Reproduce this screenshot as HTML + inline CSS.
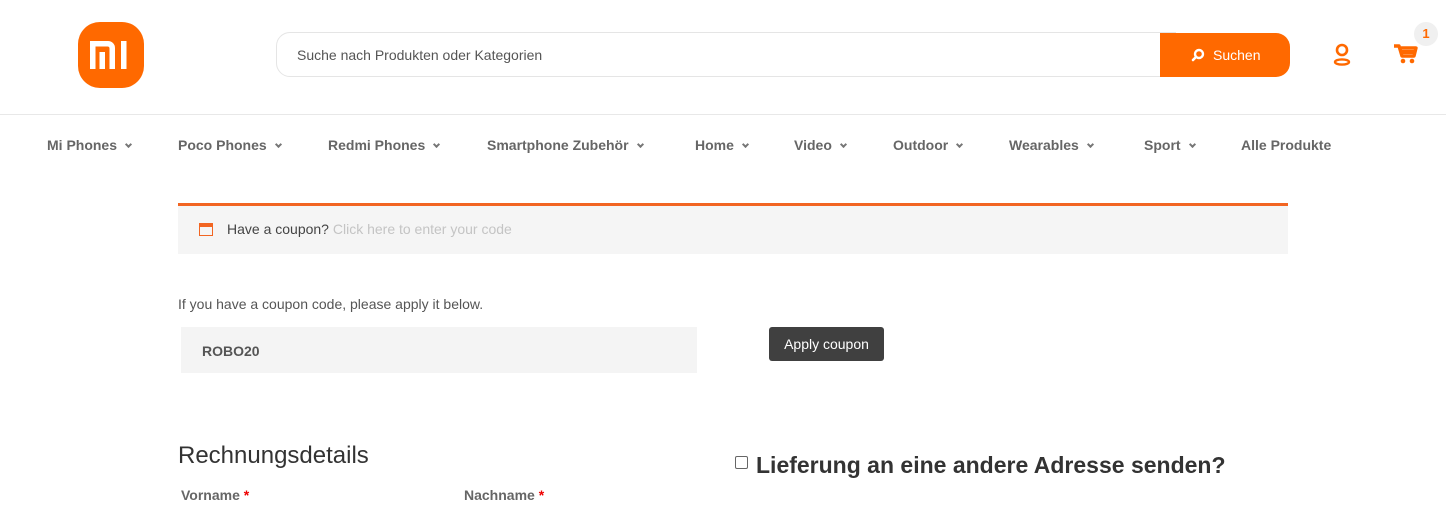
<!DOCTYPE html>
<html><head><meta charset="utf-8"><style>
*{margin:0;padding:0;box-sizing:border-box}
body{width:1446px;height:508px;overflow:hidden;background:#fff;font-family:"Liberation Sans",sans-serif;position:relative;color:#555}
.a{position:absolute;white-space:nowrap}
.nav{font-size:14px;font-weight:bold;color:#666;top:137px}
.nav .c{display:inline-block;width:5px;height:5px;border-right:2px solid #777;border-bottom:2px solid #777;transform:rotate(45deg);margin-left:9px;position:relative;top:-3px}
</style></head><body>
<div class="a" style="left:78px;top:22px;width:66px;height:66px;border-radius:22px;background:#ff6900"></div>
<svg class="a" style="left:90px;top:41px" width="44" height="28" viewBox="0 0 44 28"><path d="M0 0h18a7 7 0 0 1 7 7v21h-5.5V7.5a2 2 0 0 0-2-2H5.5V28H0z M9.5 11h5.5v17H9.5z" fill="#fff"/><rect x="31" y="0" width="5.5" height="28" fill="#fff"/></svg>
<div class="a" style="left:276px;top:32px;width:900px;height:45px;border:1px solid #e5e5e5;border-radius:14px 0 0 14px"></div>
<div class="a" style="left:297px;top:47px;font-size:14px;color:#555">Suche nach Produkten oder Kategorien</div>
<div class="a" style="left:1160px;top:33px;width:130px;height:44px;background:#ff6900;border-radius:0 14px 14px 0;color:#fff;font-size:14px;line-height:44px;padding-left:53px">Suchen</div>
<svg class="a" style="left:1191px;top:48px" width="14" height="14" viewBox="0 0 14 14"><circle cx="8" cy="6" r="4" stroke="#fff" stroke-width="2.4" fill="none"/><path d="M5 9L2 12" stroke="#fff" stroke-width="2.6" stroke-linecap="round"/></svg>
<svg class="a" style="left:1330px;top:42px" width="24" height="24" viewBox="0 0 24 24"><circle cx="12" cy="8" r="5" stroke="#ff6900" stroke-width="2.6" fill="none"/><ellipse cx="12" cy="20" rx="7" ry="2.6" stroke="#ff6900" stroke-width="2.4" fill="none"/></svg>
<svg class="a" style="left:1393px;top:43px" width="26" height="22" viewBox="0 0 26 22"><path d="M1 3h5l3 10h12l2-8H8" stroke="#ff6900" stroke-width="3.4" fill="none" stroke-linejoin="round"/><path d="M9 9h13" stroke="#ff6900" stroke-width="4"/><circle cx="10" cy="18" r="2.3" fill="#ff6900"/><circle cx="19" cy="18" r="2.3" fill="#ff6900"/></svg>
<div class="a" style="left:1414px;top:22px;width:24px;height:24px;border-radius:50%;background:#f0f0f0;color:#ff6900;font-size:13px;font-weight:bold;text-align:center;line-height:24px">1</div>
<div class="a" style="left:0;top:114px;width:1446px;height:1px;background:#e8e8e8"></div>
<div class="a nav" style="left:47px">Mi Phones<span class="c"></span></div>
<div class="a nav" style="left:178px">Poco Phones<span class="c"></span></div>
<div class="a nav" style="left:328px">Redmi Phones<span class="c"></span></div>
<div class="a nav" style="left:487px">Smartphone Zubehör<span class="c"></span></div>
<div class="a nav" style="left:695px">Home<span class="c"></span></div>
<div class="a nav" style="left:794px">Video<span class="c"></span></div>
<div class="a nav" style="left:893px">Outdoor<span class="c"></span></div>
<div class="a nav" style="left:1009px">Wearables<span class="c"></span></div>
<div class="a nav" style="left:1144px">Sport<span class="c"></span></div>
<div class="a nav" style="left:1241px">Alle Produkte</div>
<div class="a" style="left:178px;top:203px;width:1110px;height:51px;background:#f5f5f5;border-top:3px solid #f26522"></div>
<div class="a" style="left:199px;top:223px;width:14px;height:13px;border:1.5px solid #f26522;border-top-width:4px"></div>
<div class="a" style="left:227px;top:221px;font-size:14px;color:#444">Have a coupon? <span style="color:#c4c4c4">Click here to enter your code</span></div>
<div class="a" style="left:178px;top:296px;font-size:14px;color:#555">If you have a coupon code, please apply it below.</div>
<div class="a" style="left:181px;top:327px;width:516px;height:46px;background:#f4f4f4;font-size:14px;font-weight:bold;color:#555;padding:16px 0 0 21px">ROBO20</div>
<div class="a" style="left:769px;top:327px;width:115px;height:34px;background:#404040;border-radius:3px;color:#fff;font-size:14px;text-align:center;line-height:34px">Apply coupon</div>
<div class="a" style="left:178px;top:442px;font-size:24px;color:#333">Rechnungsdetails</div>
<div class="a" style="left:181px;top:487px;font-size:14px;font-weight:bold;color:#666">Vorname <span style="color:#e00">*</span></div>
<div class="a" style="left:464px;top:487px;font-size:14px;font-weight:bold;color:#666">Nachname <span style="color:#e00">*</span></div>
<div class="a" style="left:735px;top:456px;width:13px;height:13px;border:1px solid #666;border-radius:2px"></div>
<div class="a" style="left:756px;top:452px;font-size:23px;font-weight:bold;color:#333">Lieferung an eine andere Adresse senden?</div>
</body></html>
